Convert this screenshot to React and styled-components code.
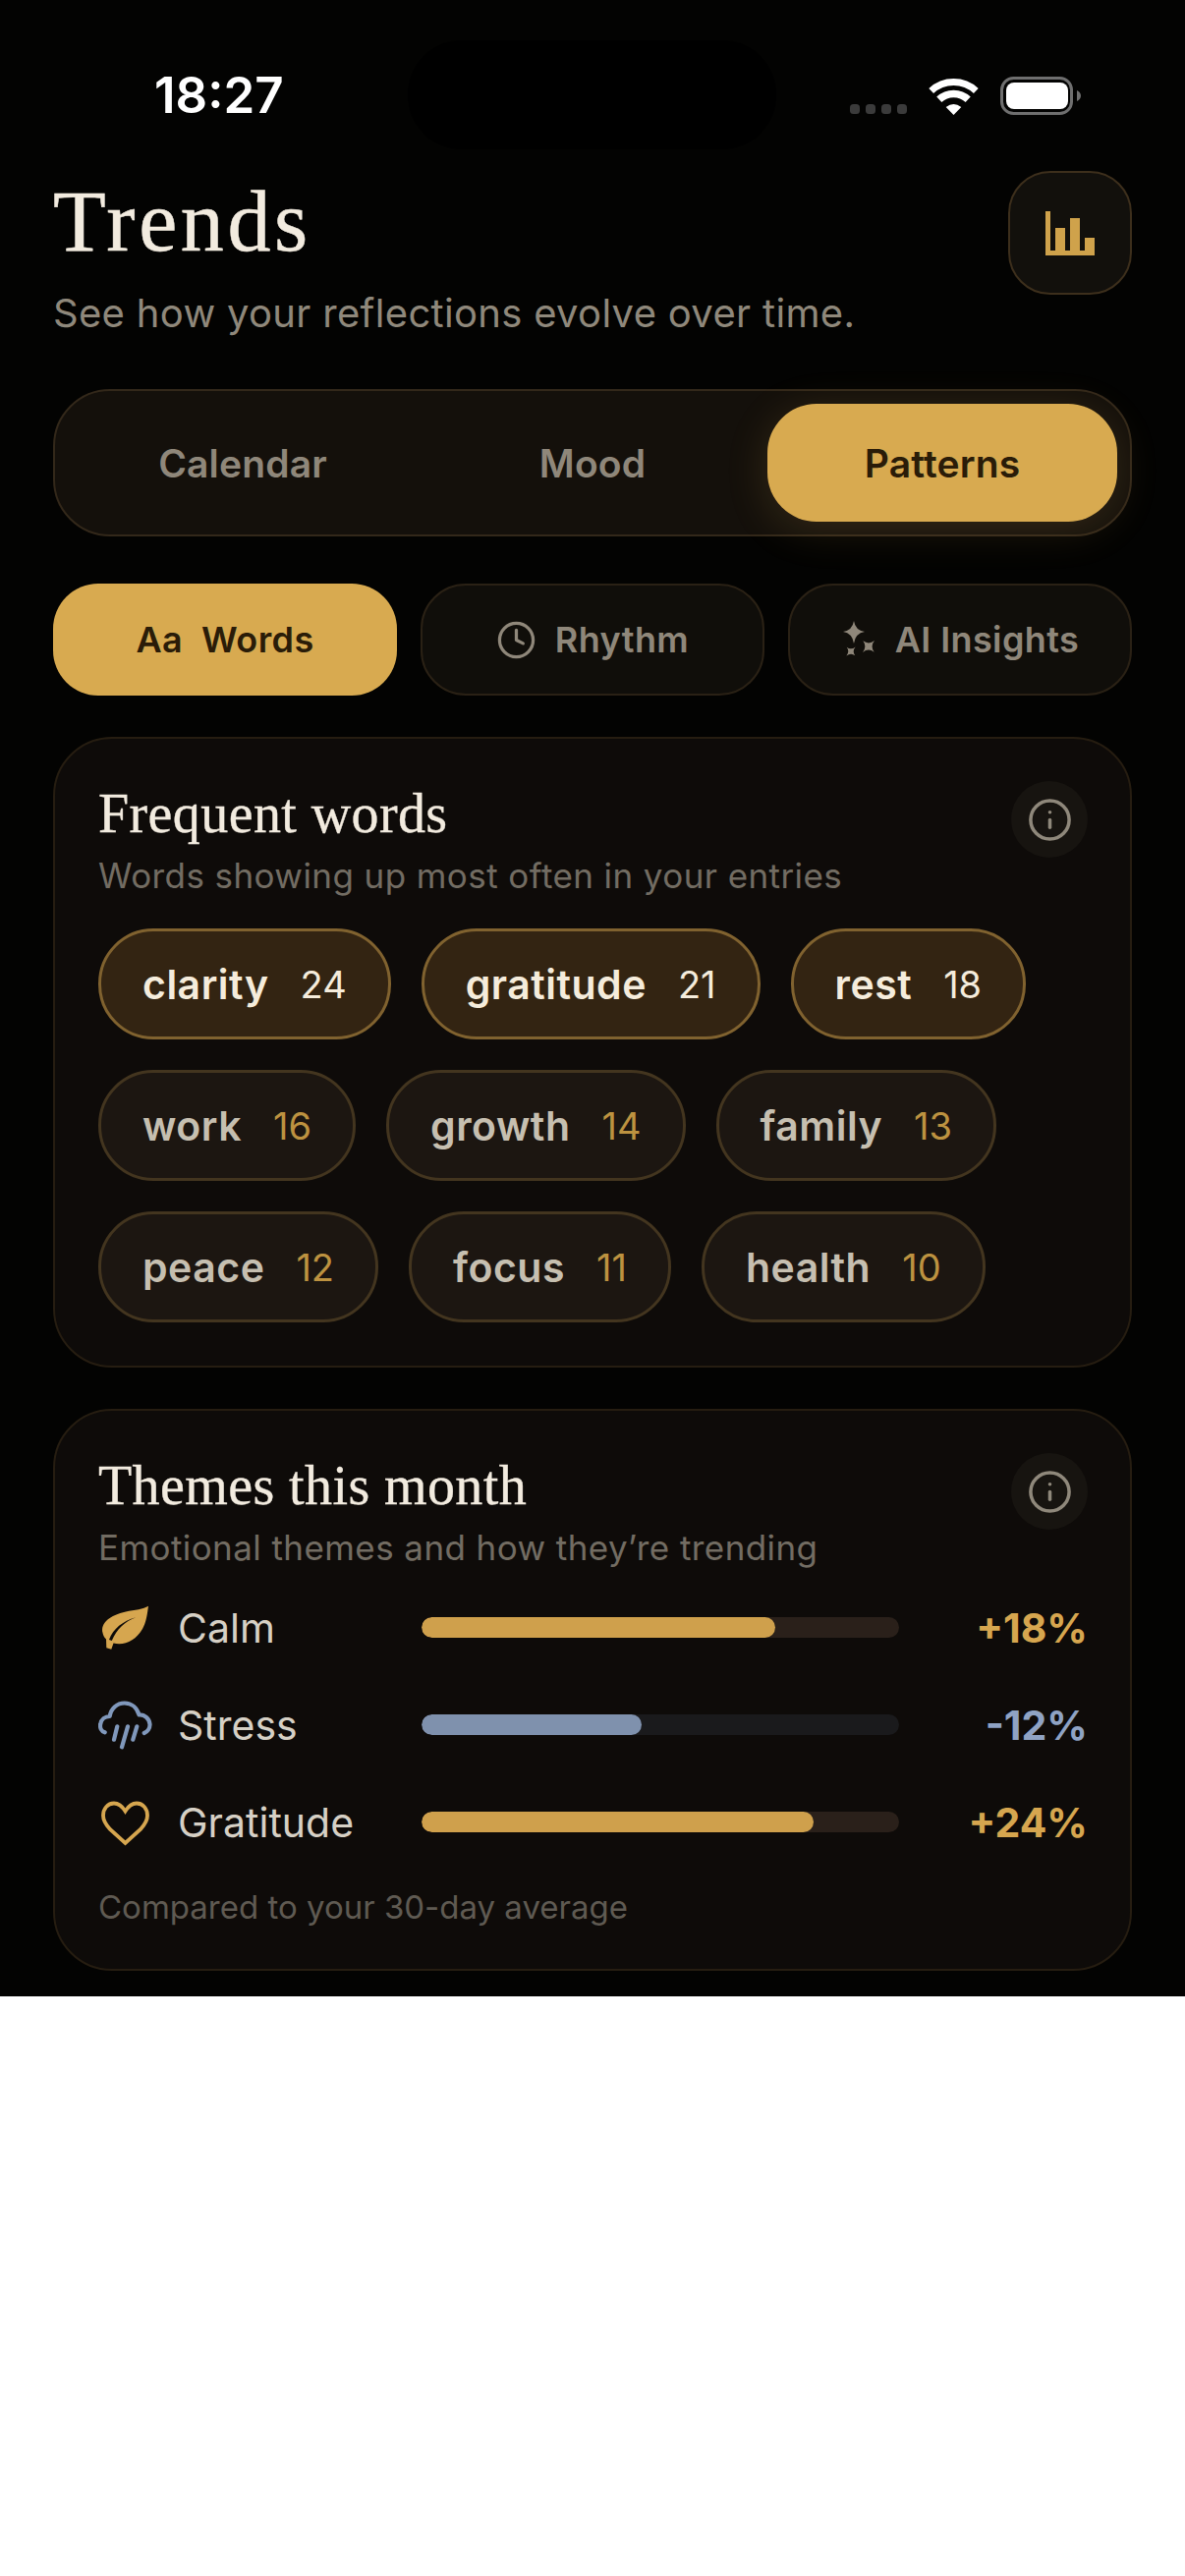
import React from "react";
import styled, { createGlobalStyle } from "styled-components";
import { Clock, Info } from "lucide-react";

const Global = createGlobalStyle`
  html, body { margin: 0; padding: 0; background: #fff; }
  * { box-sizing: border-box; }
`;

const sans = `Inter, "Noto Sans", sans-serif`;
const serif = `"Liberation Serif", serif`;

const Screen = styled.div`
  width: 1206px;
  height: 2032px;
  background: #030302;
  font-family: ${sans};
  padding: 41px 54px 0;
`;

const StatusBar = styled.div`
  display: flex;
  align-items: center;
  height: 111px;
  margin: 0 52px 0 0;
  padding-left: 103px;
`;
const Time = styled.div`
  width: 258px;
  font-size: 51px;
  font-weight: 600;
  color: #fff;
  line-height: 1;
`;
const Island = styled.div`
  width: 375px;
  height: 111px;
  border-radius: 55px;
  background: #000;
`;
const StatusRight = styled.div`
  margin-left: auto;
  display: flex;
  align-items: flex-end;
  gap: 22px;
  height: 39px;
  margin-top: 2px;
`;
const Dots = styled.div`
  display: flex;
  gap: 6px;
  margin-bottom: 1px;
`;
const Dot = styled.span`
  width: 10px;
  height: 10px;
  border-radius: 3.5px;
  background: #3b3b3b;
`;

const Header = styled.header`
  display: flex;
  justify-content: space-between;
  align-items: flex-start;
  padding-top: 22px;
`;
const Title = styled.h1`
  margin: 2px 0 0;
  font-family: ${serif};
  font-weight: 400;
  font-size: 88px;
  line-height: 100px;
  letter-spacing: 3.6px;
  -webkit-text-stroke: 0.5px #f2ebdf;
  color: #f2ebdf;
`;
const Subtitle = styled.p`
  margin: 19px 0 0;
  font-size: 40px;
  line-height: 48px;
  letter-spacing: 0.32px;
  color: #8f887b;
`;
const ChartButton = styled.div`
  width: 126px;
  height: 126px;
  border-radius: 43px;
  background: #12100c;
  border: 2.5px solid #3d2f1c;
  display: flex;
  align-items: center;
  justify-content: center;
`;

const TabBar = styled.div`
  display: grid;
  grid-template-columns: repeat(3, 1fr);
  height: 150px;
  margin-top: 53px;
  padding: 13px;
  border-radius: 58px;
  background: #14100b;
  border: 2px solid #33281a;
`;
const Tab = styled.div`
  display: flex;
  align-items: center;
  justify-content: center;
  border-radius: 50px;
  font-size: 39px;
  font-weight: 600;
  letter-spacing: 0.15px;
  color: ${(p) => (p.$active ? "#2a1c08" : "#8f877a")};
  background: ${(p) => (p.$active ? "#d8aa50" : "transparent")};
  box-shadow: ${(p) => (p.$active ? "0 8px 44px rgba(216,170,80,.16)" : "none")};
`;

const SubTabs = styled.div`
  display: grid;
  grid-template-columns: repeat(3, 350px);
  gap: 24px;
  margin-top: 48px;
`;
const SubTab = styled.div`
  height: 114px;
  border-radius: 46px;
  display: flex;
  align-items: center;
  justify-content: center;
  gap: 19px;
  font-size: 36px;
  font-weight: 600;
  letter-spacing: 0.4px;
  white-space: pre;
  color: ${(p) => (p.$active ? "#2a1c08" : "#8f877a")};
  background: ${(p) => (p.$active ? "#d8aa50" : "#100e0a")};
  border: ${(p) => (p.$active ? "none" : "2px solid #2a2115")};
`;

const Card = styled.section`
  margin-top: ${(p) => p.$mt}px;
  border-radius: 60px;
  background: #0e0b09;
  border: 2px solid #261d11;
  padding: 43px 43px 0 44px;
  height: ${(p) => p.$h}px;
`;
const CardHead = styled.div`
  display: flex;
  justify-content: space-between;
  align-items: flex-start;
`;
const CardTitle = styled.h2`
  margin: 2px 0 0;
  font-family: ${serif};
  font-weight: 400;
  font-size: 56px;
  line-height: 62px;
  letter-spacing: 0.4px;
  -webkit-text-stroke: 0.35px #f2ebdf;
  color: #f2ebdf;
`;
const CardSub = styled.p`
  margin: 11px 0 0;
  font-size: 35px;
  line-height: 42px;
  letter-spacing: 0.42px;
  color: #726c62;
`;
const InfoButton = styled.div`
  width: 78px;
  height: 78px;
  border-radius: 50%;
  background: #171410;
  color: #8f887b;
  display: flex;
  align-items: center;
  justify-content: center;
`;

const Chips = styled.div`
  display: flex;
  flex-wrap: wrap;
  gap: 31px;
  margin-top: 33px;
`;
const Chip = styled.div`
  height: 113px;
  padding: 0 42px;
  border-radius: 56px;
  display: inline-flex;
  align-items: center;
  gap: 32px;
  background: ${(p) => (p.$hot ? "#332412" : "#1c1611")};
  border: 3px solid ${(p) => (p.$hot ? "#80622f" : "#43351f")};
`;
const ChipWord = styled.span`
  font-size: 41px;
  font-weight: 600;
  letter-spacing: 0.5px;
  color: ${(p) => (p.$hot ? "#f5ecdc" : "#c6bfb0")};
`;
const ChipCount = styled.span`
  font-size: 38px;
  font-weight: 400;
  color: ${(p) => (p.$hot ? "#f5ecdc" : "#bd9240")};
`;

const Themes = styled.div`
  margin-top: 11px;
  display: flex;
  flex-direction: column;
`;
const ThemeRow = styled.div`
  display: grid;
  grid-template-columns: 81px 248px 486px 1fr;
  align-items: center;
  height: 99px;
`;
const ThemeLabel = styled.span`
  font-size: 41px;
  color: #d6d0c5;
`;
const Track = styled.div`
  height: 21px;
  border-radius: 10.5px;
  overflow: hidden;
  background: ${(p) => (p.$blue ? "#1a1a1c" : "#2a201a")};
`;
const Fill = styled.div`
  height: 100%;
  border-radius: 10.5px;
  background: ${(p) => (p.$blue ? "#7f91ad" : "#cfa04c")};
`;
const ThemeValue = styled.span`
  text-align: right;
  font-size: 41px;
  font-weight: 700;
  color: ${(p) => (p.$blue ? "#8fa3c4" : "#d6a64f")};
`;
const Footnote = styled.p`
  margin: 17px 0 0;
  font-size: 33px;
  line-height: 40px;
  color: #5f5a52;
`;

const Wifi = () => (
  <svg width="51" height="37" viewBox="0 0 51 37">
    <path d="M2.7 12.5A33.5 33.5 0 0 1 48.3 12.5" fill="none" stroke="#fff" strokeWidth="7" />
    <path d="M10.8 21.3A21.5 21.5 0 0 1 40.2 21.3" fill="none" stroke="#fff" strokeWidth="7.5" />
    <path d="M25.5 37L17.7 29Q25.5 23 33.3 29Z" fill="#fff" />
  </svg>
);
const Battery = () => (
  <svg width="82" height="39" viewBox="0 0 82 39">
    <rect x="1.5" y="1.5" width="71" height="36" rx="12" fill="none" stroke="#6f6f6f" strokeWidth="3" />
    <rect x="6" y="6" width="63" height="27" rx="8" fill="#fff" />
    <path d="M78 14C80.5 15 82 17 82 19.5S80.5 24 78 25Z" fill="#6f6f6f" />
  </svg>
);
const BarChart = () => (
  <svg width="50" height="45" viewBox="0 0 50 45" fill="#cfa24b">
    <rect x="0" y="0" width="5" height="45" />
    <rect x="10" y="17" width="10" height="28" />
    <rect x="25" y="7" width="10" height="38" />
    <rect x="40" y="27" width="10" height="18" />
    <rect x="0" y="40" width="50" height="5" />
  </svg>
);
const Sparkles = () => (
  <svg width="36" height="38" viewBox="0 0 36 38" fill="#8f877a">
    <path d="M13 0Q14.5 9.5 24 11Q14.5 12.5 13 23Q11.5 12.5 2 11Q11.5 9.5 13 0Z" />
    <path d="M28 17.5Q28.8 24.8 36 26Q28.8 27.2 28 34.5Q27.2 27.2 20 26Q27.2 24.8 28 17.5Z" transform="rotate(45 28 26)" />
    <path d="M10 24.5Q10.6 30.2 16 31Q10.6 31.8 10 37.5Q9.4 31.8 4 31Q9.4 30.2 10 24.5Z" transform="rotate(45 10 31)" />
  </svg>
);
const Leaf = () => (
  <svg width="56" height="54" viewBox="0 0 56 54">
    <path
      fill="#d6a64f"
      fillRule="evenodd"
      d="M51 4.7C46 8 37 8.5 28 10.5C12 14 2 22 4.5 32C5 34.5 6 36.5 8 38.5L8.3 47.3L13.3 48.7L15.5 42.5C27 45 38 40 45 28C49 21 50 12 51 4.7ZM11 39C15 28 25 20 38.3 16.3C27 20.5 19 28 13.8 40Z"
    />
  </svg>
);
const Rain = () => (
  <svg width="56" height="54" viewBox="0 0 56 54" fill="none" stroke="#8098bb" strokeWidth="4.2" strokeLinecap="round" strokeLinejoin="round">
    <path d="M6.7 34.3C3 33 1.5 29.5 2.2 26C3 21 7 18 11.7 18C13 10 19 4.5 26.7 4.5C34 4.5 39.5 9.5 41.5 16.5C47 16 52 20 52.5 26C52.8 30 50 33.5 46.7 35" />
    <path d="M19.3 28.3L16 41.7M30 28.3L24 49.3M39.3 28.3L35.3 41.7" />
  </svg>
);
const Heart = () => (
  <svg width="56" height="54" viewBox="0 0 56 54" fill="none" stroke="#d6a64f" strokeWidth="3.8" strokeLinejoin="miter">
    <path d="M27.5 15.5C24 10 20.5 7.5 16 7.5C9.5 7.5 5 13 5 20C5 25 7.5 29 12 34L27.5 48L43 34C47.5 29 50 25 50 20C50 13 45.5 7.5 39 7.5C34.5 7.5 31 10 27.5 15.5Z" />
  </svg>
);

const hot = [["clarity", 24], ["gratitude", 21], ["rest", 18]];
const cool = [["work", 16], ["growth", 14], ["family", 13], ["peace", 12], ["focus", 11], ["health", 10]];
const themes = [
  { label: "Calm", Icon: Leaf, pct: 74, value: "+18%" },
  { label: "Stress", Icon: Rain, pct: 46, value: "-12%", blue: true },
  { label: "Gratitude", Icon: Heart, pct: 82, value: "+24%" },
];

export default function App() {
  return (
    <Screen>
      <Global />
      <StatusBar>
        <Time>18:27</Time>
        <Island />
        <StatusRight>
          <Dots>
            <Dot /><Dot /><Dot /><Dot />
          </Dots>
          <Wifi />
          <Battery />
        </StatusRight>
      </StatusBar>

      <Header>
        <div>
          <Title>Trends</Title>
          <Subtitle>See how your reflections evolve over time.</Subtitle>
        </div>
        <ChartButton><BarChart /></ChartButton>
      </Header>

      <TabBar>
        <Tab>Calendar</Tab>
        <Tab>Mood</Tab>
        <Tab $active>Patterns</Tab>
      </TabBar>

      <SubTabs>
        <SubTab $active>{"Aa  Words"}</SubTab>
        <SubTab><Clock size={41} strokeWidth={1.9} />Rhythm</SubTab>
        <SubTab><Sparkles />AI Insights</SubTab>
      </SubTabs>

      <Card $mt={42} $h={642}>
        <CardHead>
          <div>
            <CardTitle>Frequent words</CardTitle>
            <CardSub>Words showing up most often in your entries</CardSub>
          </div>
          <InfoButton><Info size={47} strokeWidth={1.8} /></InfoButton>
        </CardHead>
        <Chips>
          {hot.map(([w, n]) => (
            <Chip key={w} $hot>
              <ChipWord $hot>{w}</ChipWord>
              <ChipCount $hot>{n}</ChipCount>
            </Chip>
          ))}
          {cool.map(([w, n]) => (
            <Chip key={w}>
              <ChipWord>{w}</ChipWord>
              <ChipCount>{n}</ChipCount>
            </Chip>
          ))}
        </Chips>
      </Card>

      <Card $mt={42} $h={572}>
        <CardHead>
          <div>
            <CardTitle>Themes this month</CardTitle>
            <CardSub>Emotional themes and how they’re trending</CardSub>
          </div>
          <InfoButton><Info size={47} strokeWidth={1.8} /></InfoButton>
        </CardHead>
        <Themes>
          {themes.map(({ label, Icon, pct, value, blue }) => (
            <ThemeRow key={label}>
              <Icon />
              <ThemeLabel>{label}</ThemeLabel>
              <Track $blue={blue}>
                <Fill $blue={blue} style={{ width: `${pct}%` }} />
              </Track>
              <ThemeValue $blue={blue}>{value}</ThemeValue>
            </ThemeRow>
          ))}
        </Themes>
        <Footnote>Compared to your 30-day average</Footnote>
      </Card>
    </Screen>
  );
}
